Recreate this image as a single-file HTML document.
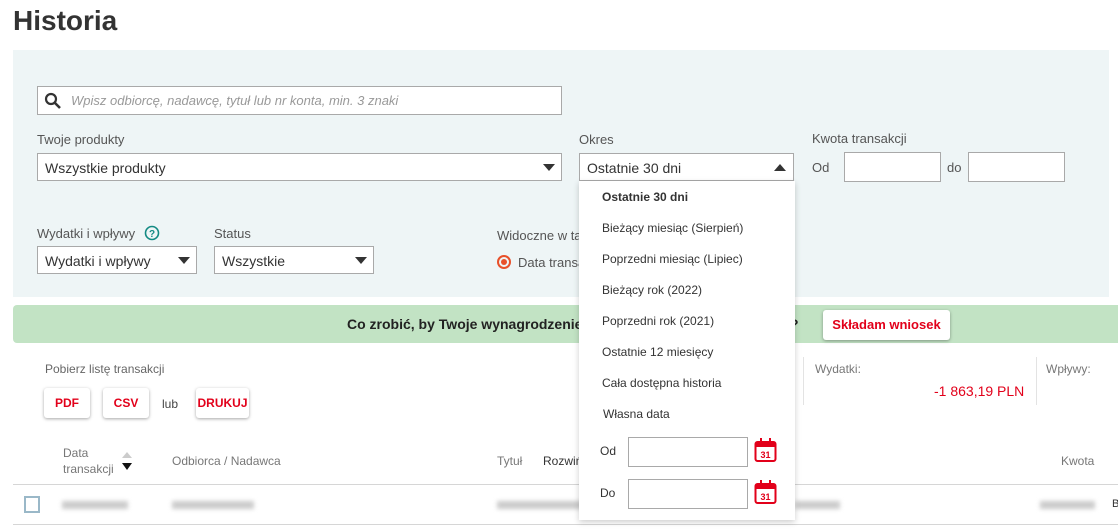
<!DOCTYPE html>
<html><head><meta charset="utf-8">
<style>
*{box-sizing:border-box;margin:0;padding:0}
body{width:1118px;height:530px;overflow:hidden;background:#fff;font-family:"Liberation Sans",sans-serif;color:#444;position:relative}
.a{position:absolute;white-space:nowrap}
.inp{position:absolute;background:#fff;border:1px solid #a9a9a9}
.lbl{font-size:13px;color:#555}
.sel{font-size:14px;color:#333;padding:6px 0 0 7px}
.tri{position:absolute;width:0;height:0;border-left:6px solid transparent;border-right:6px solid transparent;border-top:7px solid #333}
.btn{position:absolute;background:#fff;box-shadow:0 1px 3px rgba(0,0,0,.35);border-radius:3px;color:#e2001a;font-weight:bold;font-size:12px;text-align:center;line-height:30px}
.dd{font-size:12px;color:#333}
.blur{position:absolute;height:8px;background:#ccc;filter:blur(2px)}
</style></head><body>
<div class="a" style="left:13px;top:5px;font-size:28px;font-weight:bold;color:#333">Historia</div>
<div class="a" style="left:13px;top:50px;width:1096px;height:247px;background:#eef5f6"></div>

<div class="inp" style="left:37px;top:86px;width:525px;height:29px">
<svg class="a" style="left:6px;top:5px" width="18" height="18" viewBox="0 0 18 18"><circle cx="7" cy="7" r="5" fill="none" stroke="#333" stroke-width="2.2"/><path d="M11 11l5 5" stroke="#333" stroke-width="2.6"/></svg>
<div class="a" style="left:33px;top:6px;font-size:13px;font-style:italic;color:#999">Wpisz odbiorcę, nadawcę, tytuł lub nr konta, min. 3 znaki</div></div>

<div class="a lbl" style="left:37px;top:132px">Twoje produkty</div>
<div class="inp sel" style="left:37px;top:153px;width:525px;height:28px">Wszystkie produkty<div class="tri" style="left:505px;top:10px"></div></div>
<div class="a lbl" style="left:579px;top:132px">Okres</div>
<div class="inp sel" style="left:579px;top:153px;width:215px;height:28px">Ostatnie 30 dni<div class="tri" style="left:194px;top:10px;border-top:0;border-bottom:7px solid #333"></div></div>
<div class="a lbl" style="left:812px;top:131px">Kwota transakcji</div>
<div class="a lbl" style="left:812px;top:160px">Od</div>
<div class="inp" style="left:844px;top:152px;width:97px;height:30px"></div>
<div class="a lbl" style="left:947px;top:160px">do</div>
<div class="inp" style="left:968px;top:152px;width:97px;height:30px"></div>

<div class="a lbl" style="left:37px;top:226px">Wydatki i wpływy</div>
<svg class="a" style="left:144px;top:225px" width="16" height="16"><circle cx="8" cy="8" r="6.5" fill="none" stroke="#138a83" stroke-width="1.6"/><text x="8" y="12" font-size="10" font-weight="bold" fill="#138a83" text-anchor="middle" font-family="Liberation Sans">?</text></svg>
<div class="inp sel" style="left:37px;top:246px;width:160px;height:28px">Wydatki i wpływy<div class="tri" style="left:140px;top:10px"></div></div>
<div class="a lbl" style="left:214px;top:226px">Status</div>
<div class="inp sel" style="left:214px;top:246px;width:160px;height:28px">Wszystkie<div class="tri" style="left:140px;top:10px"></div></div>
<div class="a lbl" style="left:497px;top:228px">Widoczne w tabeli</div>
<div class="a" style="left:497px;top:255px;width:14px;height:14px;border-radius:50%;border:2px solid #e8502a"><div class="a" style="left:2px;top:2px;width:6px;height:6px;border-radius:50%;background:#e8502a"></div></div>
<div class="a" style="left:518px;top:255px;font-size:13px;color:#555">Data transakcji</div>

<div class="a" style="left:13px;top:305px;width:1105px;height:38px;background:#c2e3c4;border-radius:4px 0 0 4px"></div>
<div class="a" style="left:347px;top:316px;font-size:14px;font-weight:bold;color:#222">Co zrobić, by Twoje wynagrodzenie</div>
<div class="a" style="left:790px;top:316px;font-size:14px;font-weight:bold;color:#222">?</div>
<div class="btn" style="left:823px;top:310px;width:127px;height:30px;font-size:13px">Składam wniosek</div>

<div class="a" style="left:45px;top:362px;font-size:12px;color:#666">Pobierz listę transakcji</div>
<div class="btn" style="left:44px;top:388px;width:46px;height:30px">PDF</div>
<div class="btn" style="left:103px;top:388px;width:46px;height:30px">CSV</div>
<div class="a" style="left:162px;top:397px;font-size:12px;color:#444">lub</div>
<div class="btn" style="left:196px;top:388px;width:53px;height:30px">DRUKUJ</div>
<div class="a" style="left:803px;top:357px;width:1px;height:48px;background:#e3e3e3"></div>
<div class="a" style="left:815px;top:362px;font-size:12px;color:#777">Wydatki:</div>
<div class="a" style="left:934px;top:383px;font-size:14px;color:#e2001a">-1 863,19 PLN</div>
<div class="a" style="left:1036px;top:357px;width:1px;height:48px;background:#e3e3e3"></div>
<div class="a" style="left:1046px;top:362px;font-size:12px;color:#777">Wpływy:</div>

<div class="a" style="left:63px;top:445px;font-size:12px;color:#777;line-height:16px">Data<br>transakcji</div>
<div class="a" style="left:122px;top:452px;width:0;height:0;border-left:5px solid transparent;border-right:5px solid transparent;border-bottom:6px solid #ccc"></div>
<div class="a" style="left:122px;top:463px;width:0;height:0;border-left:5px solid transparent;border-right:5px solid transparent;border-top:7px solid #111"></div>
<div class="a" style="left:172px;top:454px;font-size:12px;color:#777">Odbiorca / Nadawca</div>
<div class="a" style="left:497px;top:454px;font-size:12px;color:#777">Tytuł</div>
<div class="a" style="left:543px;top:454px;font-size:12px;color:#333">Rozwiń</div>
<div class="a" style="left:1061px;top:454px;font-size:12px;color:#777">Kwota</div>
<div class="a" style="left:13px;top:484px;width:1105px;height:1px;background:#d6d6d6"></div>
<div class="a" style="left:24px;top:496px;width:16px;height:17px;border:2px solid #9ab8c8"></div>
<div class="blur" style="left:62px;top:501px;width:66px"></div>
<div class="blur" style="left:172px;top:501px;width:82px"></div>
<div class="blur" style="left:497px;top:501px;width:85px"></div>
<div class="blur" style="left:795px;top:501px;width:45px"></div>
<div class="blur" style="left:1040px;top:501px;width:55px"></div>
<div class="a" style="left:1112px;top:498px;font-size:11px;color:#333">B</div>
<div class="a" style="left:13px;top:524px;width:1105px;height:1px;background:#d6d6d6"></div>

<div class="a" style="left:579px;top:181px;width:216px;height:339px;background:#fff;box-shadow:0 2px 6px rgba(0,0,0,.2)">
<div class="a dd" style="left:23px;top:9px;font-weight:bold">Ostatnie 30 dni</div>
<div class="a dd" style="left:23px;top:40px">Bieżący miesiąc (Sierpień)</div>
<div class="a dd" style="left:23px;top:71px">Poprzedni miesiąc (Lipiec)</div>
<div class="a dd" style="left:23px;top:102px">Bieżący rok (2022)</div>
<div class="a dd" style="left:23px;top:133px">Poprzedni rok (2021)</div>
<div class="a dd" style="left:23px;top:164px">Ostatnie 12 miesięcy</div>
<div class="a dd" style="left:23px;top:195px">Cała dostępna historia</div>
<div class="a dd" style="left:24px;top:226px">Własna data</div>
<div class="a dd" style="left:21px;top:263px">Od</div>
<div class="inp" style="left:49px;top:256px;width:120px;height:30px"></div>
<div class="a dd" style="left:21px;top:305px">Do</div>
<div class="inp" style="left:49px;top:298px;width:120px;height:30px"></div>
<svg class="a" style="left:175px;top:256px" width="23" height="26" viewBox="0 0 23 26"><rect x="1.5" y="5" width="20" height="19" rx="2" fill="none" stroke="#e2001a" stroke-width="2"/><rect x="1.5" y="5" width="20" height="5" fill="#e2001a"/><path d="M7 1v7M16 1v7" stroke="#e2001a" stroke-width="2"/><text x="11.5" y="21" font-size="9" font-weight="bold" fill="#e2001a" text-anchor="middle" font-family="Liberation Sans">31</text></svg>
<svg class="a" style="left:175px;top:298px" width="23" height="26" viewBox="0 0 23 26"><rect x="1.5" y="5" width="20" height="19" rx="2" fill="none" stroke="#e2001a" stroke-width="2"/><rect x="1.5" y="5" width="20" height="5" fill="#e2001a"/><path d="M7 1v7M16 1v7" stroke="#e2001a" stroke-width="2"/><text x="11.5" y="21" font-size="9" font-weight="bold" fill="#e2001a" text-anchor="middle" font-family="Liberation Sans">31</text></svg>
</div>
</body></html>
